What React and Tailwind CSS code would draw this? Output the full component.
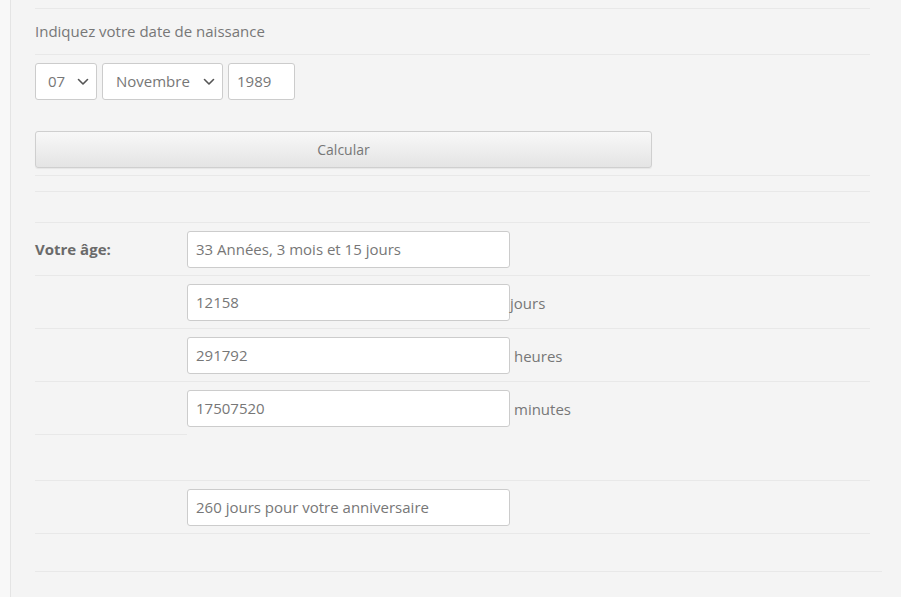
import React from "react";

const Line = ({ className = "" }) => <div className={`h-px bg-[#e8e8e8] ${className}`} />;

const Chevron = () => (
  <svg width="12" height="8" viewBox="0 0 12 8" className="shrink-0">
    <path d="M1.5 1.5 L6 6 L10.5 1.5" fill="none" stroke="#555" strokeWidth="1.6" strokeLinecap="round" strokeLinejoin="round" />
  </svg>
);

const Field = ({ children, w = "w-[323px]" }) => (
  <div className={`${w} h-[37px] bg-white border border-[#cccccc] rounded-[3px] flex items-center px-[8px] text-[15px] text-[#777]`}>
    {children}
  </div>
);

const Row = ({ label, value, unit, gapUnit }) => (
  <div className="h-[52px] flex items-center">
    <div className="w-[152px] text-[15px] font-bold text-[#6a6a6a]">{label}</div>
    <Field>{value}</Field>
    {unit && (
      <span className={`text-[15px] text-[#777] ${gapUnit ? "ml-[4px]" : ""} mt-[2px]`}>{unit}</span>
    )}
  </div>
);

export default function App() {
  return (
    <div
      className="w-full h-[597px] bg-[#f4f4f4] flex overflow-hidden"
      style={{ fontFamily: '"Open Sans", "Liberation Sans", sans-serif' }}
    >
      <div className="w-[11px] shrink-0 bg-[#f8f8f8] border-r border-[#e4e4e4]" />
      <div className="pl-[24px] w-[871px] shrink-0">
        <div className="w-[835px] pt-[8px]">
          <Line />
          <div className="h-[45px] flex items-center text-[15px] text-[#777]">
            Indiquez votre date de naissance
          </div>
          <Line />
          <div className="pt-[8px]">
            <div className="flex gap-[5px]">
              <div className="w-[62px] h-[37px] bg-white border border-[#cccccc] rounded-[3px] flex items-center justify-between pl-[12px] pr-[7px] text-[15px] text-[#777]">
                <span>07</span>
                <Chevron />
              </div>
              <div className="w-[121px] h-[37px] bg-white border border-[#cccccc] rounded-[3px] flex items-center justify-between pl-[13px] pr-[7px] text-[15px] text-[#777]">
                <span>Novembre</span>
                <Chevron />
              </div>
              <div className="w-[67px] h-[37px] bg-white border border-[#cccccc] rounded-[3px] flex items-center pl-[8px] text-[15px] text-[#777]">
                1989
              </div>
            </div>
            <div className="mt-[31px] w-[617px] h-[37px] rounded-[3px] border border-[#cfcfcf] bg-gradient-to-b from-[#f8f8f8] to-[#e4e4e4] shadow-[0_1px_1px_rgba(0,0,0,0.06)] flex items-center justify-center text-[14px] text-[#777]">
              Calcular
            </div>
            <div className="h-[7px]" />
          </div>
          <Line />
          <div className="h-[15px]" />
          <Line />
          <div className="h-[30px]" />
          <Line />
          <Row label="Votre âge:" value="33 Années, 3 mois et 15 jours" />
          <Line />
          <Row value="12158" unit="jours" />
          <Line />
          <Row value="291792" unit="heures" gapUnit />
          <Line />
          <Row value="17507520" unit="minutes" gapUnit />
          <Line className="w-[152px]" />
          <div className="h-[45px]" />
          <Line />
          <Row value="260 jours pour votre anniversaire" />
          <Line />
          <div className="h-[37px]" />
          <Line className="w-[847px]" />
        </div>
      </div>
    </div>
  );
}
